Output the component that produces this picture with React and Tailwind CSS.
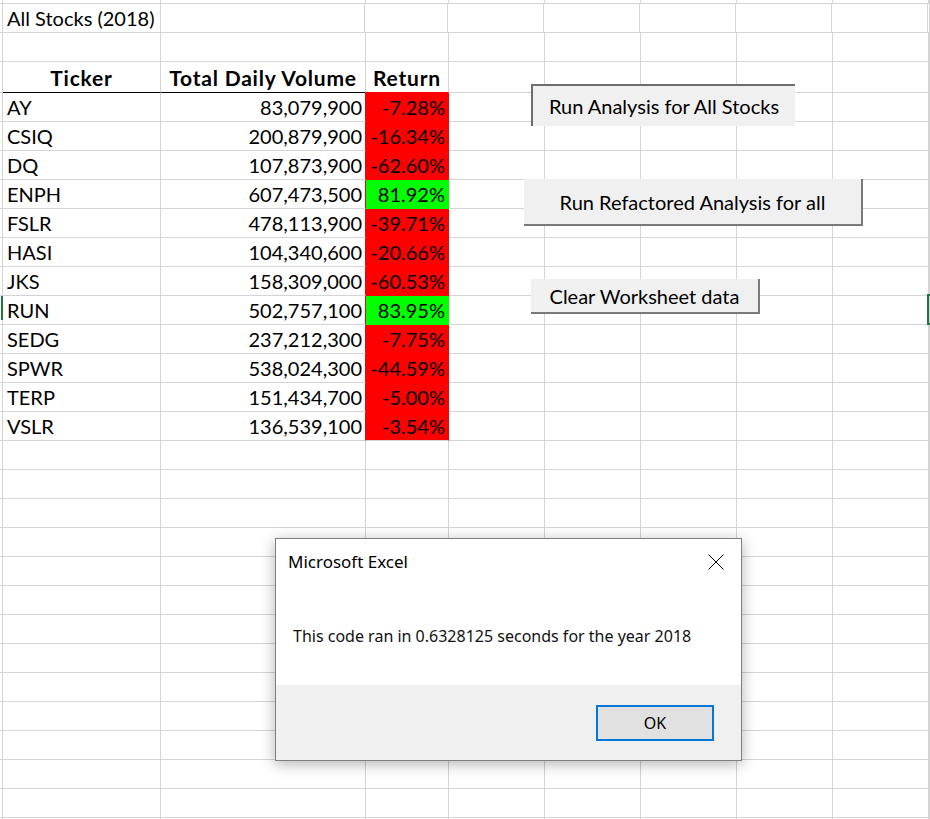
import React from 'react';

const stocks = [
  ['AY', '83,079,900', '-7.28%', false],
  ['CSIQ', '200,879,900', '-16.34%', false],
  ['DQ', '107,873,900', '-62.60%', false],
  ['ENPH', '607,473,500', '81.92%', true],
  ['FSLR', '478,113,900', '-39.71%', false],
  ['HASI', '104,340,600', '-20.66%', false],
  ['JKS', '158,309,000', '-60.53%', false],
  ['RUN', '502,757,100', '83.95%', true],
  ['SEDG', '237,212,300', '-7.75%', false],
  ['SPWR', '538,024,300', '-44.59%', false],
  ['TERP', '151,434,700', '-5.00%', false],
  ['VSLR', '136,539,100', '-3.54%', false],
];

const line = 'border-r border-b border-[#d4d4d4]';

// columns D..I are always empty
const Tail = () => (
  <>
    <div className={`w-[96px] shrink-0 ${line}`} />
    <div className={`w-[96px] shrink-0 ${line}`} />
    <div className={`w-[96px] shrink-0 ${line}`} />
    <div className={`w-[96px] shrink-0 ${line}`} />
    <div className={`w-[96px] shrink-0 ${line}`} />
    <div className={`flex-1 ${line}`} />
  </>
);

const EmptyRow = ({ className = 'h-[29px]' }) => (
  <div className={`flex ${className}`}>
    <div className={`w-[3px] shrink-0 ${line}`} />
    <div className={`w-[158px] shrink-0 ${line}`} />
    <div className={`w-[205px] shrink-0 ${line}`} />
    <div className={`w-[83px] shrink-0 ${line}`} />
    <Tail />
  </div>
);

const StockRow = ({ ticker, volume, ret, up, last }) => (
  <div className="flex h-[29px] leading-[28px]">
    <div className={`w-[3px] shrink-0 ${line}`} />
    <div className={`w-[158px] shrink-0 pl-[4px] ${line}`}>{ticker}</div>
    <div className={`w-[205px] shrink-0 pr-[3px] text-right ${line} border-r-[#ff0000]`}>{volume}</div>
    <div
      className={`w-[83px] shrink-0 pr-[3px] text-right border-r border-b ${
        up ? 'bg-[#00ff00] border-[#00ff00]' : 'bg-[#ff0000] border-[#ff0000]'
      } ${last ? 'border-b-[#d4d4d4]' : ''}`}
    >
      {ret}
    </div>
    <Tail />
  </div>
);

export default function App() {
  return (
    <div className="relative w-[930px] h-[819px] overflow-hidden bg-white text-black font-['Lato',sans-serif] text-[20px]">
      {/* sheet grid */}
      <div className="flex flex-col">
        <EmptyRow className="h-[4px]" />
        <div className="flex h-[29px] leading-[28px]">
          <div className={`w-[3px] shrink-0 ${line}`} />
          <div className="w-[158px] shrink-0 pl-[4px] border-b border-[#d4d4d4] whitespace-nowrap">All Stocks (2018)</div>
          <div className={`w-[205px] shrink-0 ${line} border-l border-l-[#d4d4d4] -ml-px`} />
          <div className={`w-[83px] shrink-0 ${line}`} />
          <Tail />
        </div>
        <EmptyRow />
        <div className="flex h-[31px] leading-[32px] font-bold text-[21px] tracking-[0.8px]">
          <div className={`w-[3px] shrink-0 ${line}`} />
          <div className={`w-[158px] shrink-0 text-center ${line} border-b-black`}>Ticker</div>
          <div className={`w-[205px] shrink-0 text-center whitespace-nowrap ${line} border-b-black`}>Total Daily Volume</div>
          <div className={`w-[83px] shrink-0 text-center ${line} border-b-[#ff0000]`}>Return</div>
          <Tail />
        </div>
        {stocks.map(([t, v, r, up], i) => (
          <StockRow key={t} ticker={t} volume={v} ret={r} up={up} last={i === stocks.length - 1} />
        ))}
        {Array.from({ length: 14 }).map((_, i) => (
          <EmptyRow key={i} />
        ))}
      </div>

      {/* selection marks */}
      <div className="absolute left-[1px] top-[296px] w-[2px] h-[24px] bg-[#217346]" />
      <div className="absolute left-[927px] top-[294px] w-[12px] h-[31px] border-2 border-[#217346]" />

      {/* form buttons */}
      <div className="absolute left-[531px] top-[84px] w-[264px] h-[42px] bg-[#f0f0f0] border-t-2 border-l-2 border-[#6d6d6d] flex items-center justify-center whitespace-nowrap">
        Run Analysis for All Stocks
      </div>
      <div className="absolute left-[524px] top-[179px] w-[339px] h-[47px] bg-[#f0f0f0] border-r-2 border-b-2 border-[#7a7a7a] flex items-center justify-center whitespace-nowrap">
        Run Refactored Analysis for all
      </div>
      <div className="absolute left-[531px] top-[279px] w-[229px] h-[35px] bg-[#f0f0f0] border-r-2 border-b-2 border-[#7a7a7a] flex items-center justify-center whitespace-nowrap">
        Clear Worksheet data
      </div>

      {/* message box */}
      <div className="absolute left-[275px] top-[538px] w-[467px] h-[223px] flex flex-col bg-white border border-[#7f7f7f] shadow-[0_3px_14px_rgba(0,0,0,0.3)] font-['Noto_Sans',sans-serif]">
        <div className="flex items-center justify-between h-[45px] pl-[12px] pr-[17px]">
          <span className="text-[17px] leading-none">Microsoft Excel</span>
          <svg width="16" height="16" viewBox="0 0 16 16" className="text-black">
            <path d="M0.5 0.5 L15.5 15.5 M15.5 0.5 L0.5 15.5" stroke="currentColor" strokeWidth="1" fill="none" />
          </svg>
        </div>
        <div className="flex-1 pl-[17px] pt-[44px] text-[16px] leading-none text-[#111]">
          This code ran in 0.6328125 seconds for the year 2018
        </div>
        <div className="h-[75px] bg-[#f0f0f0] flex justify-end items-start pt-[20px] pr-[27px]">
          <button className="w-[118px] h-[36px] bg-[#e1e1e1] border-2 border-[#0078d7] text-[16px] text-black">
            OK
          </button>
        </div>
      </div>
    </div>
  );
}
